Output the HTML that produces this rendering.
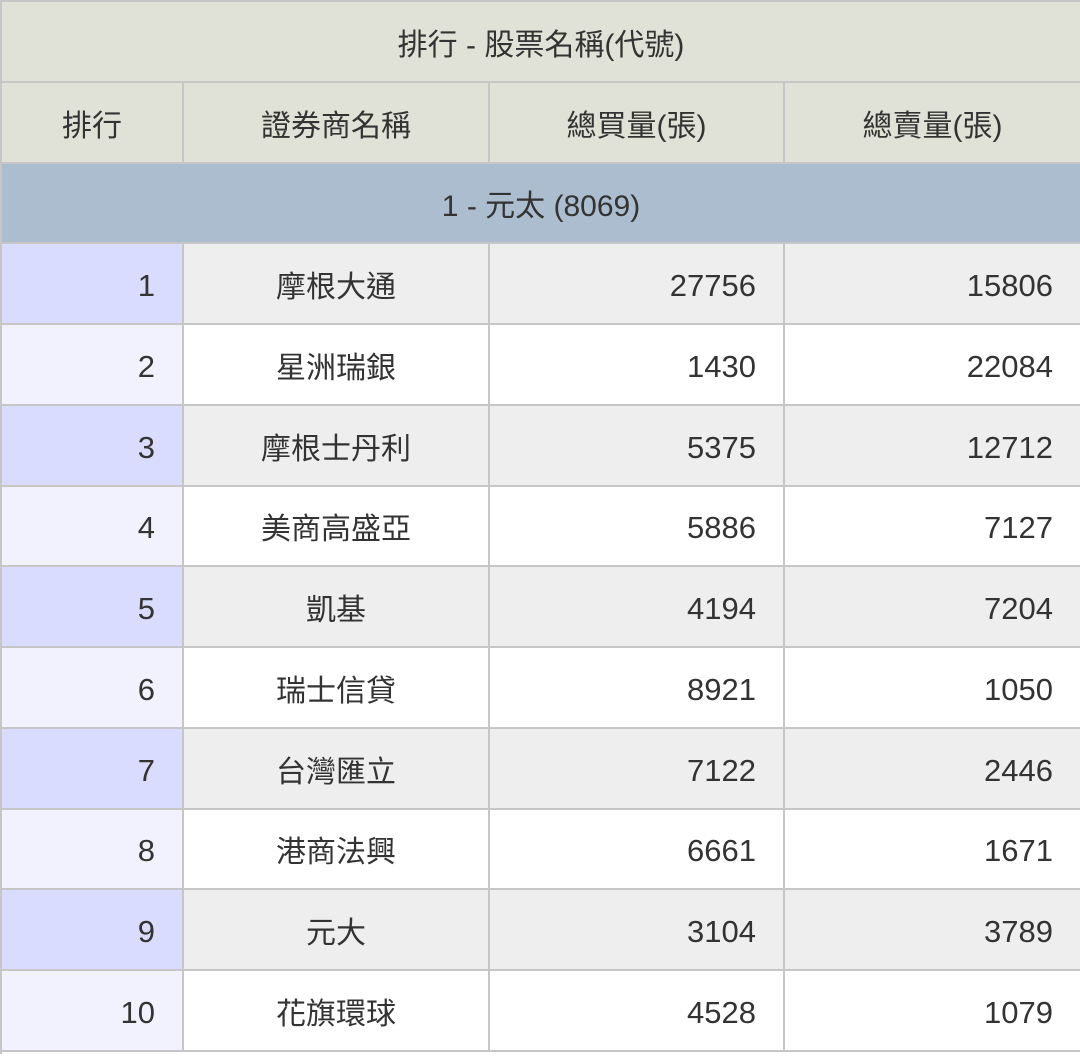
<!DOCTYPE html>
<html><head><meta charset="utf-8"><style>
*{margin:0;padding:0;box-sizing:border-box}
body{width:1080px;height:1057px;background:#fff;position:relative;overflow:hidden;font-family:"Liberation Sans","Noto Sans CJK TC",sans-serif;color:#333;font-size:30px}
.c{position:absolute;display:flex;align-items:center;border-right:2px solid #c6c6c6;border-bottom:2px solid #c6c6c6}
.m{justify-content:center}
.r{justify-content:flex-end;padding-right:27px;font-size:31px;padding-top:4px}
</style></head><body>
<div style="position:absolute;left:0;top:0;width:1080px;height:2px;background:#c6c6c6"></div>
<div style="position:absolute;left:0;top:0;width:2px;height:1054px;background:#c6c6c6"></div>
<div id="t"></div>
<script>
var b=[2];for(var i=1;i<=13;i++)b.push(Math.round(2+80.77*i));
var cols=[2,184,490,785,1082];
var h='';
function cell(x0,x1,y0,y1,bg,cls,txt){h+='<div class="c '+cls+'" style="left:'+x0+'px;top:'+y0+'px;width:'+(x1-x0)+'px;height:'+(y1-y0)+'px;background:'+bg+'">'+txt+'</div>';}
cell(2,1082,b[0],b[1],'#e1e2d7','m','排行 - 股票名稱(代號)');
var hd=['排行','證券商名稱','總買量(張)','總賣量(張)'];
for(var j=0;j<4;j++)cell(cols[j],cols[j+1],b[1],b[2],'#e1e2d7','m',hd[j]);
cell(2,1082,b[2],b[3],'#abbdcf','m','1 - 元太 (8069)');
var d=[['摩根大通',27756,15806],['星洲瑞銀',1430,22084],['摩根士丹利',5375,12712],['美商高盛亞',5886,7127],['凱基',4194,7204],['瑞士信貸',8921,1050],['台灣匯立',7122,2446],['港商法興',6661,1671],['元大',3104,3789],['花旗環球',4528,1079]];
for(var i=0;i<10;i++){var y0=b[3+i],y1=b[4+i],odd=i%2==0;
cell(cols[0],cols[1],y0,y1,odd?'#d9dcfe':'#f2f2fe','r',i+1);
cell(cols[1],cols[2],y0,y1,odd?'#eeeeee':'#fff','m',d[i][0]);
cell(cols[2],cols[3],y0,y1,odd?'#eeeeee':'#fff','r',d[i][1]);
cell(cols[3],cols[4],y0,y1,odd?'#eeeeee':'#fff','r',d[i][2]);}
document.getElementById('t').innerHTML=h;
</script>
</body></html>
